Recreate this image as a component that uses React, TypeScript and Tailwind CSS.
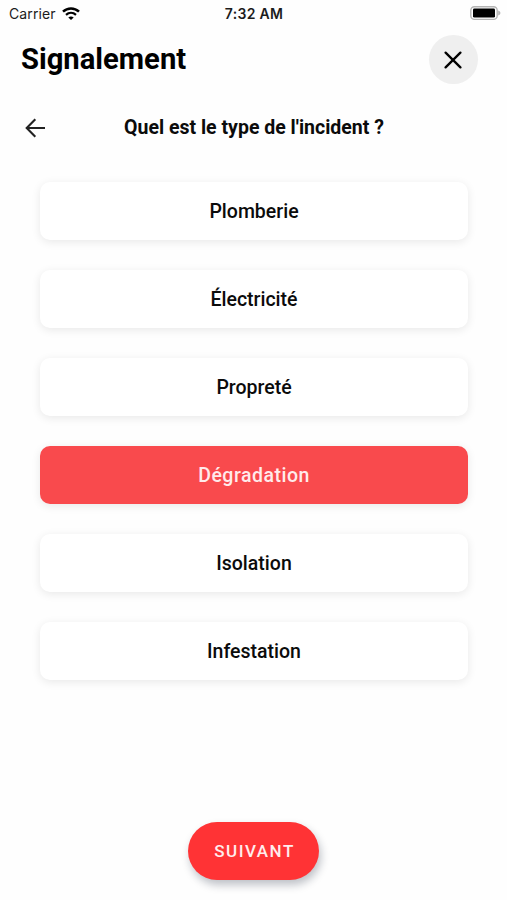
import { useState } from "react";

const incidentTypes = [
  "Plomberie",
  "Électricité",
  "Propreté",
  "Dégradation",
  "Isolation",
  "Infestation",
];

function StatusBar() {
  return (
    <div className="grid h-[27px] grid-cols-3 items-center pr-[6px] pl-[9px] font-['Inter',sans-serif] text-[#1c1c1c]">
      <div className="flex items-center gap-[6px]">
        <span className="text-[14px] tracking-[0.1px]">Carrier</span>
        <svg width="18" height="14" viewBox="0 0 18 14" fill="none">
          <path d="M1 4.7C5.5 0.4 12.5 0.4 17 4.7" stroke="#000" strokeWidth="2.5" />
          <path d="M4 7.9C6.9 5.3 11.1 5.3 14 7.9" stroke="#000" strokeWidth="2.2" />
          <path d="M9 13.1L6.3 10.4C7.9 9.1 10.1 9.1 11.7 10.4Z" fill="#000" />
        </svg>
      </div>
      <span className="pr-[2px] text-center text-[14px] font-semibold tracking-[0.3px]">7:32 AM</span>
      <svg className="justify-self-end" width="31" height="15" viewBox="0 0 31 15">
        <rect x="0.8" y="0.8" width="26.4" height="12.6" rx="3.6" fill="#fff" stroke="#b4b4b4" strokeWidth="1.4" />
        <rect x="3" y="2.6" width="22" height="9" rx="1.4" fill="#000" />
        <path d="M28.2 4.6V9.6C29.6 9.1 30.4 8.2 30.4 7.1S29.6 5.1 28.2 4.6Z" fill="#b4b4b4" />
      </svg>
    </div>
  );
}

export default function App() {
  const [selected, setSelected] = useState("Dégradation");

  return (
    <main className="flex h-[900px] w-[507px] flex-col overflow-hidden bg-[#fefefe] font-['Roboto',sans-serif] text-[#0b0b0b]">
      <StatusBar />

      <header className="mt-2 flex items-center justify-between pr-[29px] pl-[21px]">
        <h1 className="pb-px text-[29.2px] leading-[48px] font-bold text-black">Signalement</h1>
        <button aria-label="Fermer" className="flex size-[49px] items-center justify-center rounded-full bg-[#efefef] pr-px">
          <svg width="18" height="18" viewBox="0 0 18 18" stroke="#000" strokeWidth="2.3" strokeLinecap="round">
            <path d="M1.6 1.6L16.4 16.4M16.4 1.6L1.6 16.4" />
          </svg>
        </button>
      </header>

      <div className="mt-[29px] grid h-6 grid-cols-[1fr_auto_1fr] items-center pr-[24px] pl-[25px]">
        <button aria-label="Retour">
          <svg width="21" height="20" viewBox="0 0 21 20" fill="none" stroke="#222" strokeWidth="2.1">
            <path d="M10.3 1.2L1.7 10L10.3 18.8M1.7 10H20" />
          </svg>
        </button>
        <h2 className="text-[19.5px] font-bold">Quel est le type de l'incident ?</h2>
      </div>

      <ul className="mt-[45px] flex flex-col gap-[30px] pr-[39px] pl-[40px]">
        {incidentTypes.map((type) => (
          <li key={type}>
            <button
              onClick={() => setSelected(type)}
              className={`block h-[58px] w-full rounded-[10px] pt-[2px] text-[19.5px] font-medium shadow-[0_2px_10px_rgba(0,0,0,0.09)] ${
                type === selected ? "bg-[#f94a4d] tracking-[0.5px] text-[#ffebeb]" : "bg-white"
              }`}
            >
              {type}
            </button>
          </li>
        ))}
      </ul>

      <button className="mt-[142px] h-[58px] w-[131px] self-center rounded-full bg-[#ff3335] pt-[2px] pl-[2px] text-[17px] font-medium tracking-[1.5px] text-[#ffeded] shadow-[2px_5px_8px_rgba(20,30,50,0.27)]">
        SUIVANT
      </button>
    </main>
  );
}
